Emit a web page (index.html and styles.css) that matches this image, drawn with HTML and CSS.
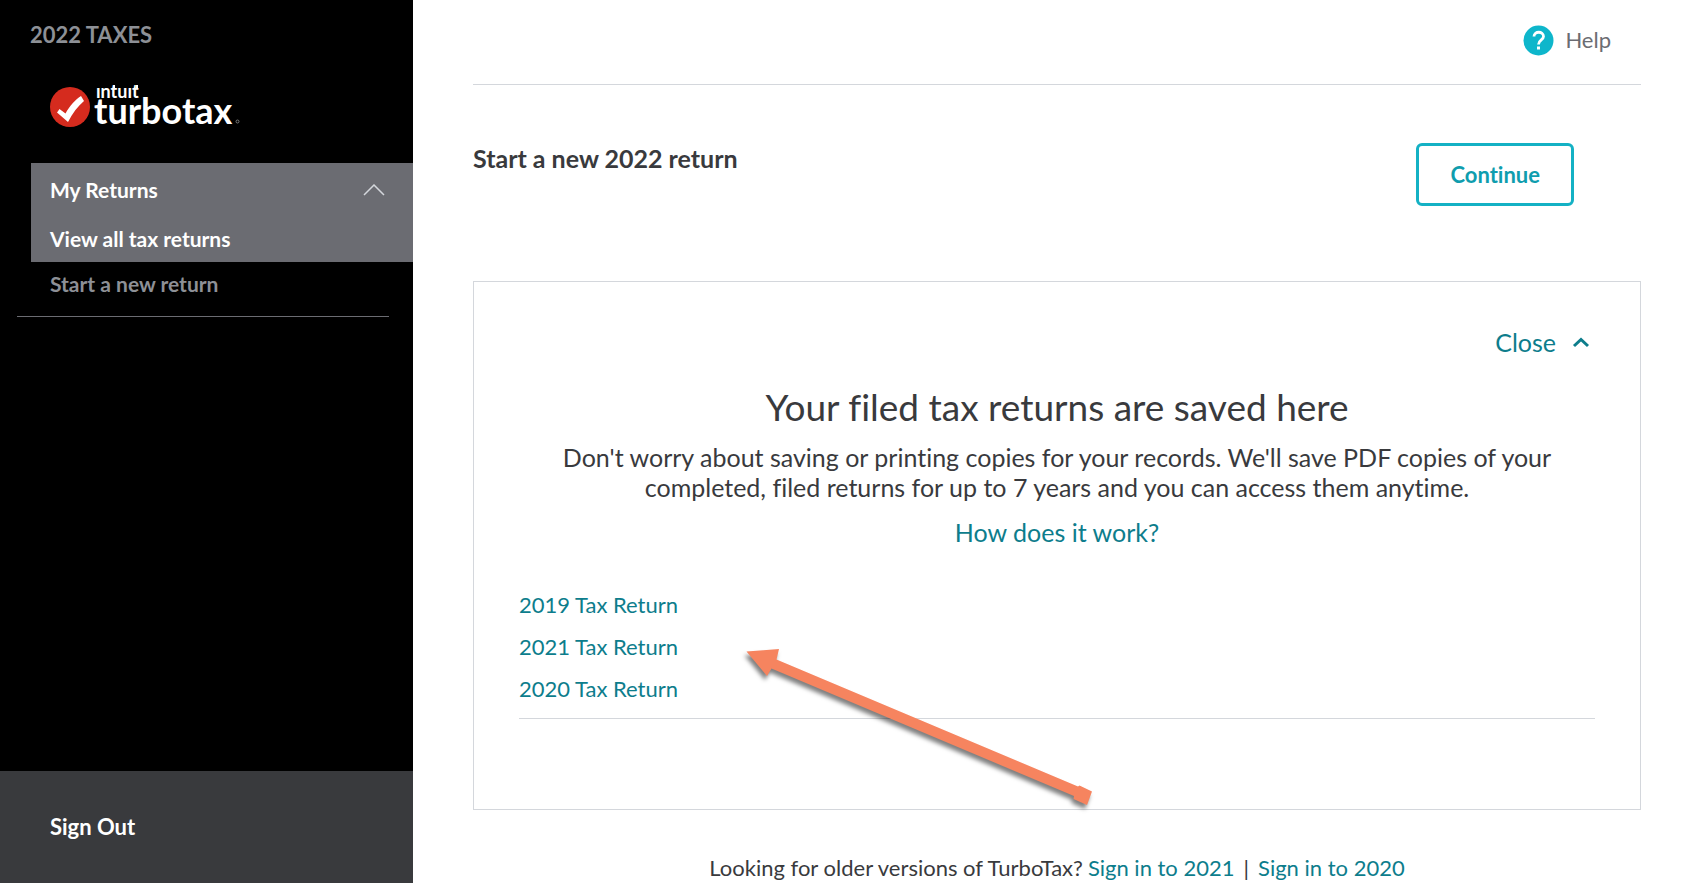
FILE: index.html
```html
<!DOCTYPE html>
<html lang="en">
<head>
<meta charset="utf-8">
<title>TurboTax - My Returns</title>
<link rel="stylesheet" href="styles.css">
</head>
<body>
<div class="app">
  <aside class="sidebar">
    <p class="season">2022 TAXES</p>
    <a class="logo" href="#" aria-label="Intuit TurboTax">
      <svg width="192" height="60" viewBox="0 -12 192 60">
        <circle cx="20" cy="22" r="20" fill="#d52b1e"/>
        <path d="M7 27.500 L9.500 24 L15.500 28.500 C20 20.500 25 15 31 11 L34 16 C28 21 22.500 28 18 37 Z" fill="#fff"/>
        <text class="brand" x="46" y="13">ıntuıt</text>
        <path d="M64 0v4M87 0v4" stroke="#fff" stroke-width="2"/>
        <text class="product" x="44" y="39">turbotax</text>
        <circle cx="187.500" cy="36.500" r="1.500" fill="none" stroke="#bbb" stroke-width="0.600"/>
      </svg>
    </a>
    <nav class="nav">
      <div class="nav-open">
        <button class="nav-item nav-toggle" type="button">My Returns
          <svg width="22" height="12" viewBox="0 0 22 12"><path d="M1 11 11 1 21 11" fill="none" stroke="#d4d7dc" stroke-width="1.500"/></svg>
        </button>
        <a class="nav-item nav-current" href="#">View all tax returns</a>
      </div>
      <a class="nav-item nav-muted" href="#">Start a new return</a>
    </nav>
    <div class="sign-out"><a href="#">Sign Out</a></div>
  </aside>
  <main class="main">
    <header class="topbar">
      <a class="help" href="#">
        <svg width="31" height="31" viewBox="0 0 31 31">
          <circle cx="15.500" cy="15.500" r="15" fill="#0eb6cb"/>
          <path d="M11 11.500C11 5.800 20.500 5.800 20.500 11.500C20.500 15 15.500 14.800 15.500 19.500" fill="none" stroke="#fff" stroke-width="2.800"/>
          <rect x="14" y="21.500" width="3" height="3" fill="#fff"/>
        </svg>
        Help
      </a>
    </header>
    <section class="start">
      <h2>Start a new 2022 return</h2>
      <button class="continue" type="button">Continue</button>
    </section>
    <section class="card">
      <button class="close" type="button">Close
        <svg width="18" height="11" viewBox="0 0 18 11"><path d="M2 9 9 2.500 16 9" fill="none" stroke="#0d7d8c" stroke-width="3"/></svg>
      </button>
      <div class="intro">
        <h1>Your filed tax returns are saved here</h1>
        <p>Don't worry about saving or printing copies for your records. We'll save PDF copies of your completed, filed returns for up to 7 years and you can access them anytime.</p>
        <a href="#">How does it work?</a>
      </div>
      <ul class="returns">
        <li><a href="#">2019 Tax Return</a></li>
        <li><a href="#">2021 Tax Return</a></li>
        <li><a href="#">2020 Tax Return</a></li>
      </ul>
      <svg class="arrow" width="360" height="170" viewBox="0 0 360 170">
        <path d="M6.500 11.500 39 9 36.500 19.500 338 146.500 339.500 145.500 352 151.500 347 165 333.500 159 334 156 31.500 28.500 27 36Z" fill="#f6845f"/>
      </svg>
    </section>
    <footer class="older">
      <span>Looking for older versions of TurboTax?</span>
      <a href="#">Sign in to 2021</a>
      <span class="bar">|</span>
      <a href="#">Sign in to 2020</a>
    </footer>
  </main>
</div>
</body>
</html>
```
FILE: styles.css
```css
* { box-sizing: border-box; }

body {
  margin: 0;
  background: #fff;
  color: #393a3d;
  font-family: Lato, "Open Sans", sans-serif;
  font-size: 22px;
  line-height: 30px;
  font-variant-ligatures: none;
}

h1, h2, p, ul { margin: 0; padding: 0; }
a { color: #0d7d8c; text-decoration: none; }
button { font: inherit; font-variant-ligatures: none; background: none; border: 0; padding: 0; cursor: pointer; }

.app { display: flex; min-height: 100vh; }

.sidebar {
  flex: 0 0 413px;
  display: flex;
  flex-direction: column;
  background: #000;
  font-weight: 700;
}
.season { padding: 20px 30px 0; color: #8d9096; }
.logo { display: block; height: 60px; margin: 23px 50px 30px; }
.logo svg { display: block; }
.brand { fill: #fff; font: 700 18px Lato, sans-serif; }
.product { fill: #fff; font: 700 36px Lato, sans-serif; }

.nav { margin: 0 24px 0 17px; padding-bottom: 16px; border-bottom: 1px solid #6b6c72; }
.nav-open { margin: 0 -24px 0 14px; background: #6b6c72; }
.nav-item { display: flex; align-items: center; font-size: 21px; }
.nav-toggle { width: 100%; height: 53px; justify-content: space-between; padding: 0 28px 0 19px; color: #fff; font-weight: 700; }
.nav-current { height: 46px; padding: 0 19px; color: #fff; }
.nav-muted { height: 38px; padding: 6px 33px 0; color: #8d9096; }

.sign-out { margin-top: auto; height: 112px; padding: 41px 50px; background: #393a3d; }
.sign-out a { color: #fff; }

.main { flex: 1; min-width: 0; padding: 0 59px 0 60px; }

.topbar { display: flex; justify-content: flex-end; align-items: center; height: 85px; padding: 0 30px 4px; border-bottom: 1px solid #d4d7dc; }
.help { display: flex; align-items: center; gap: 11px; color: #6b6c72; }

.start { display: flex; justify-content: space-between; align-items: flex-start; padding: 58px 67px 75px 0; }
.start h2 { font-size: 25px; line-height: 30px; font-weight: 700; }
.continue { padding: 14px 31px; border: 3px solid #14b1c4; border-radius: 6px; color: #0f9dae; font-weight: 700; line-height: 29px; }

.card { position: relative; padding: 44px 45px 90px; border: 1px solid #d4d7dc; font-size: 25px; }
.close { display: flex; align-items: center; gap: 16px; margin: 0 5px 0 auto; color: #0d7d8c; font-size: 25px; line-height: 32px; }
.intro { margin-top: 26px; text-align: center; }
.intro h1 { font-size: 37px; line-height: 46px; font-weight: 400; }
.intro p { margin: 12px 0 15px; }
.returns { margin-top: 37px; padding-bottom: 8px; border-bottom: 1px solid #d4d7dc; list-style: none; font-size: 22px; line-height: 42px; }

.arrow { position: absolute; left: 266px; top: 358px; filter: drop-shadow(-2px 4px 2px rgb(0 0 0 / 0.5)); }

.older { display: flex; flex-wrap: wrap; justify-content: center; gap: 0 5px; margin-top: 43px; }
.bar { padding: 0 4px; }
```
